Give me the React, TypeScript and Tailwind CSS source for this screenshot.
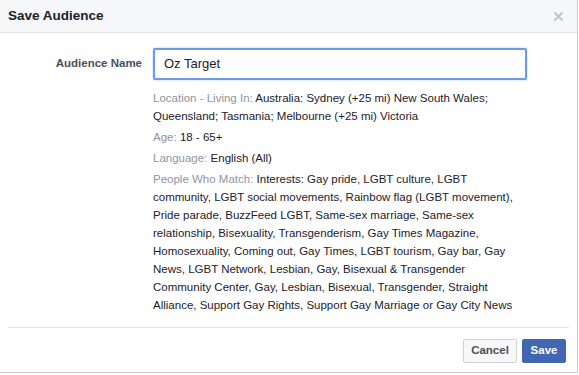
import React from 'react';

const details = [
  { label: 'Location - Living In:', value: 'Australia: Sydney (+25 mi) New South Wales; Queensland; Tasmania; Melbourne (+25 mi) Victoria' },
  { label: 'Age:', value: '18 - 65+' },
  { label: 'Language:', value: 'English (All)' },
  {
    label: 'People Who Match:',
    value:
      'Interests: Gay pride, LGBT culture, LGBT community, LGBT social movements, Rainbow flag (LGBT movement), Pride parade, BuzzFeed LGBT, Same-sex marriage, Same-sex relationship, Bisexuality, Transgenderism, Gay Times Magazine, Homosexuality, Coming out, Gay Times, LGBT tourism, Gay bar, Gay News, LGBT Network, Lesbian, Gay, Bisexual & Transgender Community Center, Gay, Lesbian, Bisexual, Transgender, Straight Alliance, Support Gay Rights, Support Gay Marriage or Gay City News',
  },
];

const App: React.FC = () => {
  return (
    <div className="w-[579px] h-[375px] bg-white font-['Liberation_Sans',Arial,sans-serif]">
      <div className="w-[578px] h-[373px] flex flex-col border-r border-b border-[#c9ccd1] bg-white">
        {/* Header */}
        <div className="h-[33px] shrink-0 flex items-center justify-between pl-2 pr-[14px] bg-[#f6f7f9] border-b border-[#e5e5e5]">
          <h1 className="text-[13.5px] font-bold text-[#1d2129]">Save Audience</h1>
          <svg width="9" height="9" viewBox="0 0 9 9" className="mt-[1px]">
            <path d="M1 1 L8 8 M8 1 L1 8" stroke="#bec2c9" strokeWidth="1.8" strokeLinecap="round" />
          </svg>
        </div>

        {/* Body */}
        <div className="pt-[15px]">
          <div className="flex items-center">
            <label className="w-[153px] pr-[11px] text-right text-[11.5px] font-bold text-[#4b4f56]">Audience Name</label>
            <div className="w-[374px] h-[32px] flex items-center pl-[9px] border-2 border-[#6c98f2] rounded-[2px] shadow-[0_0_2px_rgba(66,133,244,0.5)]">
              <span className="text-[13px] text-[#1d2129]">Oz Target</span>
            </div>
          </div>

          <div className="ml-[153px] mt-[9px] w-[366px] text-[11.5px] leading-[18px]">
            {details.map((d) => (
              <p key={d.label} className="mb-[3px]">
                <span className="text-[#90949c]">{d.label}</span>{' '}
                <span className="text-[#1d2129]">{d.value}</span>
              </p>
            ))}
          </div>
        </div>

        {/* Footer */}
        <div className="mt-auto">
          <div className="mx-2 h-px bg-[#e5e5e5]" />
          <div className="flex justify-end gap-[5px] pt-[11px] pb-[9px] pr-[11px]">
            <button className="h-[24px] w-[54px] rounded-[2px] border border-[#ced0d4] bg-[#f6f7f9] text-[11.5px] font-bold text-[#4b4f56]">
              Cancel
            </button>
            <button className="h-[24px] w-[44px] rounded-[2px] border border-[#4267b2] bg-[#4267b2] text-[11.5px] font-bold text-white">
              Save
            </button>
          </div>
        </div>
      </div>
    </div>
  );
};

export default App;
